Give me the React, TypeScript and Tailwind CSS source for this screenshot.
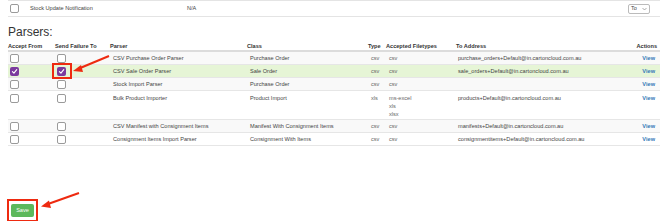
import React from "react";

const font = { fontFamily: '"Liberation Sans", Arial, sans-serif' };

function Box({ checked = false }: { checked?: boolean }) {
  if (checked) {
    return (
      <div className="w-[9px] h-[9px] rounded-[2px] bg-[#7b3a9e] flex items-center justify-center">
        <svg width="7" height="7" viewBox="0 0 10 10">
          <path d="M2 5.2 L4.2 7.4 L8.2 2.4" fill="none" stroke="white" strokeWidth="1.6" strokeLinecap="round" strokeLinejoin="round" />
        </svg>
      </div>
    );
  }
  return <div className="w-[9px] h-[9px] rounded-[2px] border border-[#9a9a9a] bg-white" />;
}

type Row = {
  accept: boolean;
  fail: boolean;
  parser: string;
  cls: string;
  type: string;
  files: string[];
  addr: string;
  bg: string;
  h: string;
};

const rows: Row[] = [
  { accept: false, fail: false, parser: "CSV Purchase Order Parser", cls: "Purchase Order", type: "csv", files: ["csv"], addr: "purchase_orders+Default@in.cartoncloud.com.au", bg: "bg-[#f9f9f9]", h: "h-[13px]" },
  { accept: true, fail: true, parser: "CSV Sale Order Parser", cls: "Sale Order", type: "csv", files: ["csv"], addr: "sale_orders+Default@in.cartoncloud.com.au", bg: "bg-[#e6f5d6]", h: "h-[13px]" },
  { accept: false, fail: false, parser: "Stock Import Parser", cls: "Purchase Order", type: "csv", files: ["csv"], addr: "", bg: "bg-[#f9f9f9]", h: "h-[13px]" },
  { accept: false, fail: false, parser: "Bulk Product Importer", cls: "Product Import", type: "xls", files: ["ms-excel", "xls", "xlsx"], addr: "products+Default@in.cartoncloud.com.au", bg: "bg-white", h: "h-[29px]" },
  { accept: false, fail: false, parser: "CSV Manifest with Consignment Items", cls: "Manifest With Consignment Items", type: "csv", files: ["csv"], addr: "manifests+Default@in.cartoncloud.com.au", bg: "bg-[#f9f9f9]", h: "h-[13px]" },
  { accept: false, fail: false, parser: "Consignment Items Import Parser", cls: "Consignment With Items", type: "csv", files: ["csv"], addr: "consignmentitems+Default@in.cartoncloud.com.au", bg: "bg-white", h: "h-[13px]" },
];

export default function App() {
  return (
    <div className="relative w-[670px] h-[221px] bg-white overflow-hidden text-[#333]" style={font}>
      {/* top row */}
      <div className="ml-[8px] w-[652px] h-[17px] border-y border-[#e4e4e4] flex items-center text-[5.6px] text-[#444]">
        <div className="w-[22px] pl-[2px]"><Box /></div>
        <div className="w-[157px]">Stock Update Notification</div>
        <div className="flex-1">N/A</div>
        <div className="mr-[10px] w-[22px] h-[10px] border border-[#bbb] rounded-[2px] flex items-center justify-between px-[2px] text-[5.5px]">
          <span>To</span>
          <svg width="5" height="4" viewBox="0 0 10 6"><path d="M1 1 L5 5 L9 1" fill="none" stroke="#888" strokeWidth="1.4" /></svg>
        </div>
      </div>

      <div className="ml-[8px] mt-[8px] text-[12px] leading-[14px] text-[#333]">Parsers:</div>

      {/* table */}
      <div className="ml-[8px] mt-[3px] w-[652px] text-[5.6px]">
        <div className="h-[10px] flex items-center font-bold border-b-2 border-[#dcdcdc] text-[#333]">
          <div className="w-[47px]">Accept From</div>
          <div className="w-[55px]">Send Failure To</div>
          <div className="w-[137px]">Parser</div>
          <div className="w-[121px]">Class</div>
          <div className="w-[18px]">Type</div>
          <div className="w-[70px]">Accepted Filetypes</div>
          <div className="flex-1">To Address</div>
          <div className="pr-[3px]">Actions</div>
        </div>
        {rows.map((r, i) => (
          <div key={i} className={`${r.h} ${r.bg} flex ${r.files.length > 1 ? "items-start pt-[3px]" : "items-center"} border-b border-[#e6e6e6] text-[#444]`}>
            <div className="w-[47px] pl-[2px]"><Box checked={r.accept} /></div>
            <div className="w-[55px] pl-[2px]"><Box checked={r.fail} /></div>
            <div className="w-[137px] pl-[3px]">{r.parser}</div>
            <div className="w-[121px] pl-[3px]">{r.cls}</div>
            <div className="w-[18px] pl-[3px] text-[#666]">{r.type}</div>
            <div className="w-[70px] pl-[3px] flex flex-col leading-[8px] text-[#666]">
              {r.files.map((f) => (
                <span key={f}>{f}</span>
              ))}
            </div>
            <div className="flex-1 pl-[2px]">{r.addr}</div>
            <div className="pr-[5px] font-bold text-[#337ab7]">View</div>
          </div>
        ))}
      </div>

      {/* save button */}
      <div className="absolute left-[7px] top-[199px] w-[31px] h-[23px] border-2 border-[#ee2a10] flex items-center justify-center">
        <button className="w-[23px] h-[13px] bg-[#5cb85c] rounded-[2px] text-white text-[5.6px] flex items-center justify-center">
          Save
        </button>
      </div>

      {/* annotations */}
      <div className="absolute left-[52px] top-[63px] w-[20px] h-[16px] border-2 border-[#ee2a10]" />
      <svg className="absolute left-0 top-0 pointer-events-none" width="670" height="221">
        <line x1="109" y1="56" x2="79" y2="68.5" stroke="#ee2a10" strokeWidth="2" />
        <polygon points="73,71 81,65 83,72" fill="#ee2a10" />
        <line x1="79" y1="193" x2="48" y2="204" stroke="#ee2a10" strokeWidth="2" />
        <polygon points="41,206.5 49,200.5 51,208" fill="#ee2a10" />
      </svg>
    </div>
  );
}
